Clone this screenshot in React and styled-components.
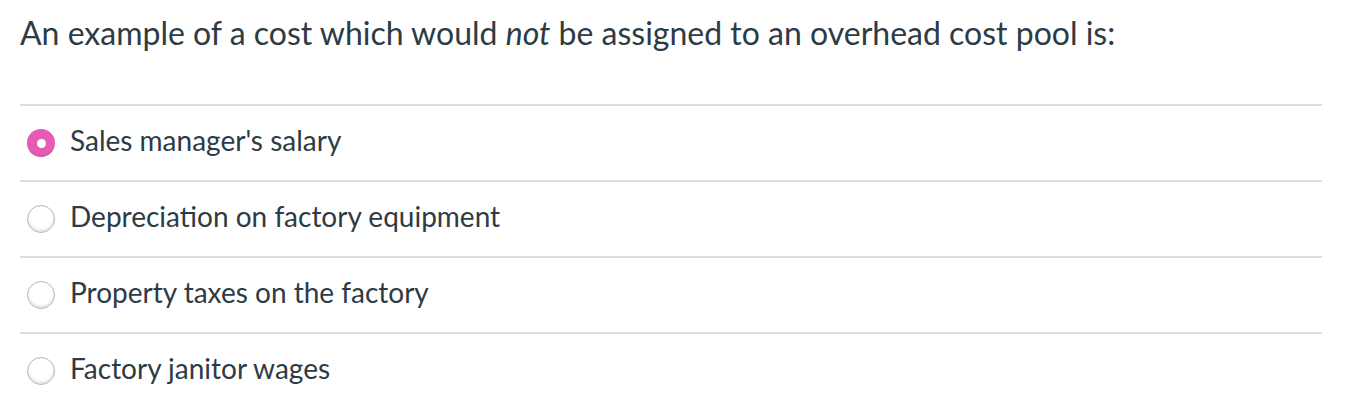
import React from "react";
import styled, { createGlobalStyle } from "styled-components";

const GlobalStyle = createGlobalStyle`
  html, body {
    margin: 0;
    padding: 0;
    background: #fff;
  }
  body {
    font-family: Lato, "Noto Sans", sans-serif;
    color: #2d3b45;
  }
`;

const Question = styled.div`
  padding: 10px 20px 0 20px;
  width: 1302px;
`;

const Prompt = styled.p`
  margin: 0;
  font-size: 32px;
  line-height: 46px;
  height: 94px;

  em {
    font-style: italic;
  }
`;

const Answers = styled.div`
  display: flex;
  flex-direction: column;
`;

const Answer = styled.label`
  display: flex;
  align-items: center;
  gap: 15px;
  height: 74px;
  border-top: 2px solid #dcdcdc;
  padding-left: 7px;
  cursor: pointer;
`;

const AnswerText = styled.span`
  font-size: 28px;
  line-height: 34px;
  padding-bottom: 6px;
`;

const Radio = styled.span`
  width: 28px;
  height: 28px;
  border-radius: 50%;
  box-sizing: border-box;
  flex-shrink: 0;
  display: flex;
  align-items: center;
  justify-content: center;
  background: ${(p) => (p.$checked ? "#e65bb6" : "#fff")};
  border: ${(p) => (p.$checked ? "none" : "1.5px solid #b8b8b8")};
  box-shadow: ${(p) =>
    p.$checked
      ? "inset 0 -2px 2px rgba(0,0,0,0.08)"
      : "inset 0 -2px 3px rgba(0,0,0,0.12)"};

  &::after {
    content: "";
    display: ${(p) => (p.$checked ? "block" : "none")};
    width: 9px;
    height: 9px;
    border-radius: 50%;
    background: #fff;
  }
`;

const answers = [
  { text: "Sales manager's salary", checked: true },
  { text: "Depreciation on factory equipment" },
  { text: "Property taxes on the factory" },
  { text: "Factory janitor wages" },
];

const App = () => {
  return (
    <>
      <GlobalStyle />
      <Question>
        <Prompt>
          An example of a cost which would <em>not</em> be assigned to an
          overhead cost pool is:
        </Prompt>
        <Answers>
          {answers.map((a) => (
            <Answer key={a.text}>
              <Radio $checked={a.checked} />
              <AnswerText>{a.text}</AnswerText>
            </Answer>
          ))}
        </Answers>
      </Question>
    </>
  );
};

export default App;
